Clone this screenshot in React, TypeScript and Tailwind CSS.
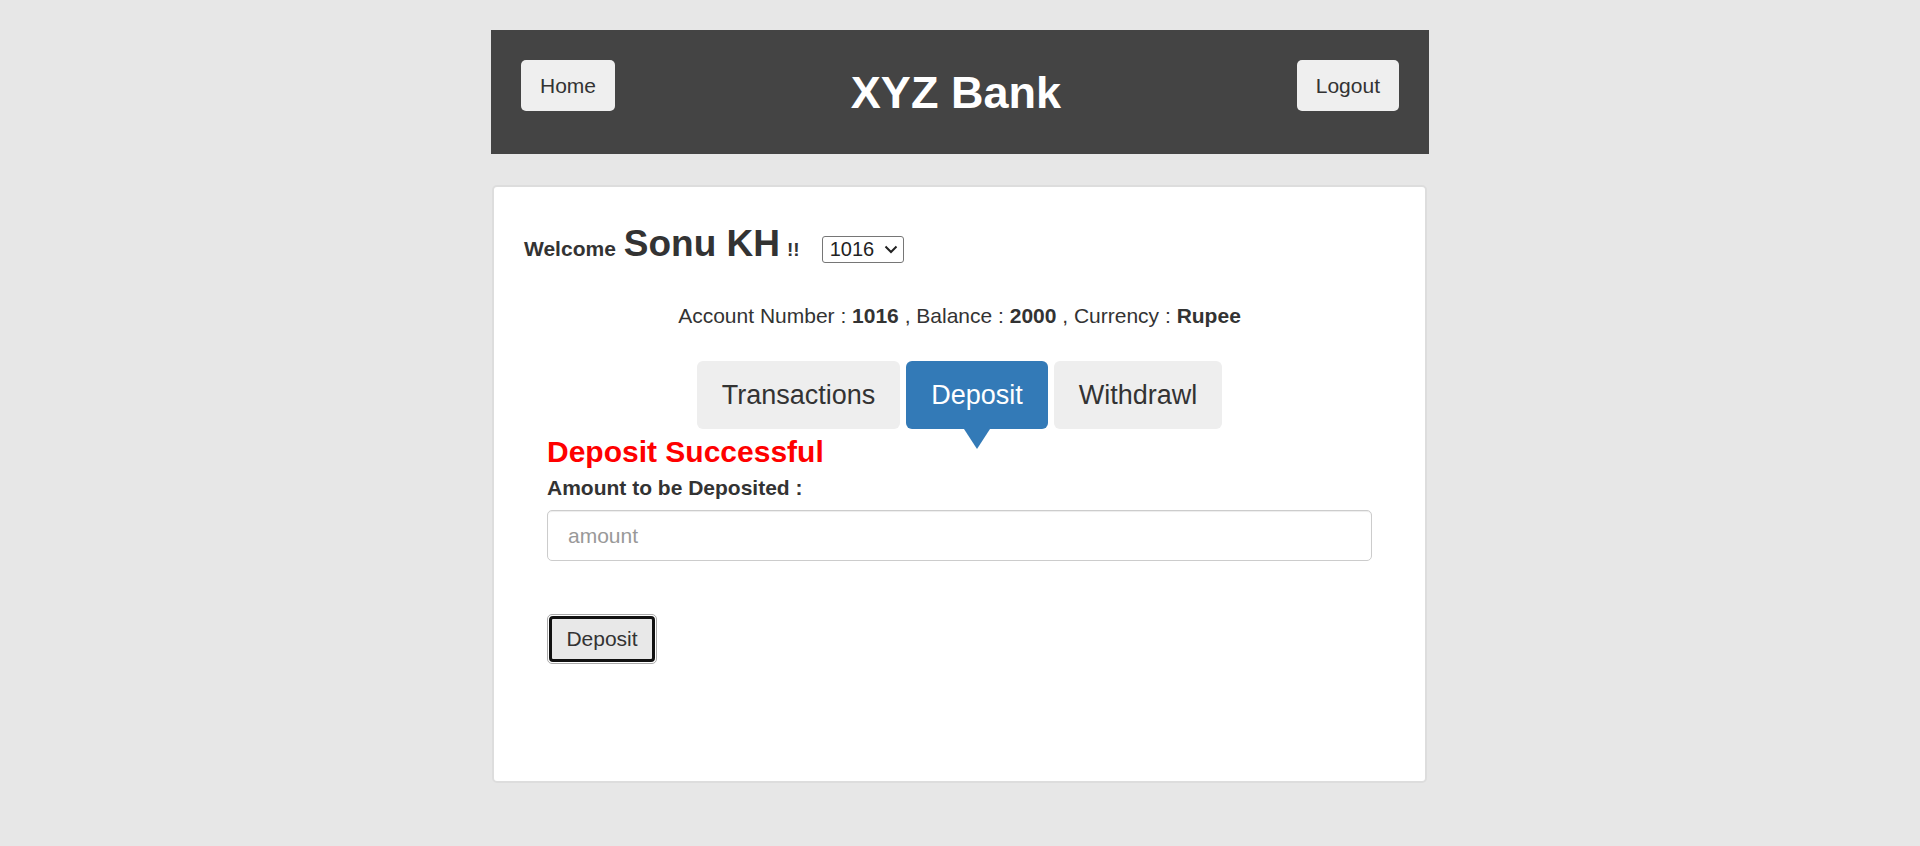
export default function App() {
  const tabs = ["Transactions", "Deposit", "Withdrawl"];
  const active = "Deposit";

  return (
    <div className="min-h-screen bg-[#e7e7e7] pt-[30px] font-['Liberation_Sans',Arial,sans-serif] text-[#333]">
      <div className="mx-auto w-[938px]">
        {/* top bar */}
        <header className="flex h-[124px] items-start justify-between bg-[#444444] px-[30px] pt-[30px]">
          <button className="h-[51px] rounded-[5px] bg-[#efefef] px-[19px] text-[21px] text-[#333]">Home</button>
          <h1 className="mt-[8px] text-[45px] font-bold leading-[49px] text-white">XYZ Bank</h1>
          <button className="h-[51px] rounded-[5px] bg-[#efefef] px-[19px] text-[21px] text-[#333]">Logout</button>
        </header>

        {/* account panel */}
        <main className="ml-[1px] mt-[31px] w-[935px] rounded-[5px] border-2 border-[#dddddd] bg-white pb-[117px] pt-[36px]">
          <div className="flex items-baseline pl-[30px]">
            <span className="text-[21px] font-bold leading-none">Welcome</span>
            <span className="ml-[8px] text-[37px] font-bold leading-[41px]">Sonu KH</span>
            <span className="ml-[7px] text-[19px] font-bold leading-none">!!</span>
            <div className="relative ml-[22px]">
              <select
                defaultValue="1016"
                className="h-[27px] w-[82px] appearance-none rounded-[3px] border border-[#767676] bg-white pl-[7px] text-[20px] leading-[23px] text-[#222]"
              >
                <option value="1016">1016</option>
              </select>
              <svg
                className="pointer-events-none absolute right-[6px] top-[9px] h-[9px] w-[14px]"
                viewBox="0 0 14 9"
                fill="none"
                stroke="#222"
                strokeWidth="2"
              >
                <polyline points="1.5,1.5 7,7 12.5,1.5" />
              </svg>
            </div>
          </div>

          <p className="mt-[37px] h-[30px] text-center text-[21px] leading-[30px]">
            Account Number : <b>1016</b> , Balance : <b>2000</b> , Currency : <b>Rupee</b>
          </p>

          <nav className="mt-[30px] flex justify-center gap-[6px]">
            {tabs.map((t) =>
              t === active ? (
                <div
                  key={t}
                  className="relative flex h-[68px] items-center rounded-[6px] bg-[#337ab7] px-[25px] text-[27px] text-white"
                >
                  {t}
                  <span className="absolute left-1/2 top-full h-0 w-0 -translate-x-1/2 border-x-[13px] border-t-[20px] border-x-transparent border-t-[#337ab7]" />
                </div>
              ) : (
                <div
                  key={t}
                  className="flex h-[68px] items-center rounded-[6px] bg-[#eeeeee] px-[25px] text-[27px] text-[#333]"
                >
                  {t}
                </div>
              )
            )}
          </nav>

          <section className="px-[53px]">
            <h2 className="mt-[6px] text-[30px] font-bold leading-[33px] text-[#ff0000]">Deposit Successful</h2>
            <label className="mt-[8px] block text-[21px] font-bold leading-[24px]">Amount to be Deposited :</label>
            <input
              placeholder="amount"
              className="mt-[10px] block h-[51px] w-full rounded-[5px] border border-[#cccccc] px-[20px] text-[21px] shadow-[inset_0_1px_1px_rgba(0,0,0,0.075)] outline-none placeholder:text-[#999]"
            />
            <button className="mt-[53px] block h-[50px] w-[110px] rounded-[5px] border border-[#aaaaaa] bg-white p-[1px]">
              <span className="flex h-full w-full items-center justify-center rounded-[4px] border-[3px] border-[#111] bg-[#e8e8e8] text-[21px] text-[#333]">
                Deposit
              </span>
            </button>
          </section>
        </main>
      </div>
    </div>
  );
}
